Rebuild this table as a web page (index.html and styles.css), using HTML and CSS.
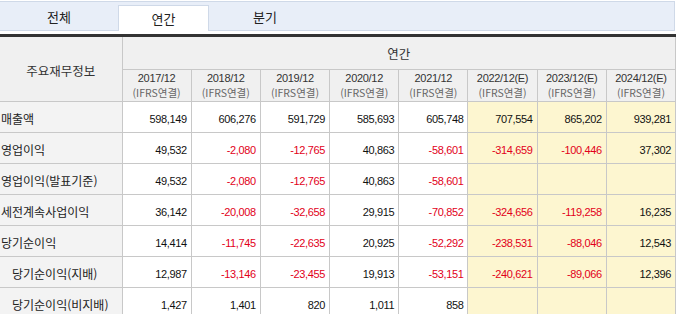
FILE: index.html
```html
<!DOCTYPE html>
<html lang="ko">

<head>
  <meta charset="UTF-8">
  <meta name="viewport" content="width=device-width, initial-scale=1.0">
  <title>주요재무정보</title>
  <link rel="stylesheet" href="styles.css">
</head>

<body>
  <ul class="tabs">
    <li class="tab tab-all">전체</li>
    <li class="tab tab-year active">연간</li>
    <li class="tab tab-quarter">분기</li>
  </ul>
  <div class="fin">
    <table class="fin-table">
      <colgroup>
        <col class="col-label">
        <col span="8">
      </colgroup>
      <thead>
        <tr class="head-top">
          <th rowspan="2" class="head-label">주요재무정보</th>
          <th colspan="8">연간</th>
        </tr>
        <tr class="head-years">
          <th><span class="y">2017/12</span><span class="ifrs">(IFRS연결)</span></th>
          <th><span class="y">2018/12</span><span class="ifrs">(IFRS연결)</span></th>
          <th><span class="y">2019/12</span><span class="ifrs">(IFRS연결)</span></th>
          <th><span class="y">2020/12</span><span class="ifrs">(IFRS연결)</span></th>
          <th><span class="y">2021/12</span><span class="ifrs">(IFRS연결)</span></th>
          <th><span class="y">2022/12(E)</span><span class="ifrs">(IFRS연결)</span></th>
          <th><span class="y">2023/12(E)</span><span class="ifrs">(IFRS연결)</span></th>
          <th><span class="y">2024/12(E)</span><span class="ifrs">(IFRS연결)</span></th>
        </tr>
      </thead>
      <tbody>
        <tr>
          <th class="label">매출액</th>
          <td>598,149</td><td>606,276</td><td>591,729</td><td>585,693</td><td>605,748</td>
          <td class="est">707,554</td><td class="est">865,202</td><td class="est">939,281</td>
        </tr>
        <tr>
          <th class="label">영업이익</th>
          <td>49,532</td><td class="neg">-2,080</td><td class="neg">-12,765</td><td>40,863</td><td class="neg">-58,601</td>
          <td class="est neg">-314,659</td><td class="est neg">-100,446</td><td class="est">37,302</td>
        </tr>
        <tr>
          <th class="label">영업이익(발표기준)</th>
          <td>49,532</td><td class="neg">-2,080</td><td class="neg">-12,765</td><td>40,863</td><td class="neg">-58,601</td>
          <td class="est"></td><td class="est"></td><td class="est"></td>
        </tr>
        <tr>
          <th class="label">세전계속사업이익</th>
          <td>36,142</td><td class="neg">-20,008</td><td class="neg">-32,658</td><td>29,915</td><td class="neg">-70,852</td>
          <td class="est neg">-324,656</td><td class="est neg">-119,258</td><td class="est">16,235</td>
        </tr>
        <tr>
          <th class="label">당기순이익</th>
          <td>14,414</td><td class="neg">-11,745</td><td class="neg">-22,635</td><td>20,925</td><td class="neg">-52,292</td>
          <td class="est neg">-238,531</td><td class="est neg">-88,046</td><td class="est">12,543</td>
        </tr>
        <tr>
          <th class="label sub">당기순이익(지배)</th>
          <td>12,987</td><td class="neg">-13,146</td><td class="neg">-23,455</td><td>19,913</td><td class="neg">-53,151</td>
          <td class="est neg">-240,621</td><td class="est neg">-89,066</td><td class="est">12,396</td>
        </tr>
        <tr>
          <th class="label sub">당기순이익(비지배)</th>
          <td>1,427</td><td>1,401</td><td>820</td><td>1,011</td><td>858</td>
          <td class="est"></td><td class="est"></td><td class="est"></td>
        </tr>
      </tbody>
    </table>
  </div>
</body>

</html>
```

FILE: styles.css
```css
html {
  box-sizing: border-box;
  font-family: 'Noto Sans CJK KR', sans-serif;
  font-size: 12px;
  color: #333;
}

*,
*:after,
*:before {
  box-sizing: inherit;
}

body {
  margin: 0;
  background-color: #fff;
}

/* tabs */
.tabs {
  display: flex;
  margin: 1px 0 3px 0;
  padding: 0;
  width: 675px;
  height: 30px;
  list-style: none;
  border: 1px solid #cfd9e8;
  border-left: none;
  background-color: #e8eef8;
}

.tab {
  display: flex;
  align-items: center;
  justify-content: center;
  padding-top: 1px;
  font-size: 13px;
  color: #222;
}

.tab-all {
  width: 118px;
}

.tab-year {
  width: 91px;
}

.tab-quarter {
  width: 112px;
}

.tab.active {
  margin-top: 3px;
  margin-bottom: -1px;
  padding-top: 0;
  background-color: #fff;
  border: 1px solid #cfd9e8;
  border-bottom: none;
}

/* table */
.fin {
  border-top: 3px solid #333;
  width: 676px;
}

.fin-table {
  width: 676px;
  table-layout: fixed;
  border-collapse: collapse;
}

.col-label {
  width: 122px;
}

.fin-table th,
.fin-table td {
  border: 1px solid #c8c8c8;
  padding: 0;
}

.fin-table tr> :first-child {
  border-left: none;
}

.fin-table thead tr:first-child th {
  border-top: none;
}

.fin-table thead th {
  background-color: #f0f0f0;
  font-weight: normal;
  text-align: center;
  color: #333;
}

.head-top {
  height: 32px;
}

.head-top th {
  padding-top: 1px;
  font-size: 12.5px;
}

.head-label {
  padding-top: 4px !important;
}

.head-years {
  height: 32px;
}

.head-years th {
  padding-top: 1px;
}

.head-years .y {
  display: block;
  font-family: 'Liberation Sans', Arial, sans-serif;
  font-size: 11px;
  line-height: 13px;
  color: #333;
  letter-spacing: -.3px;
}

.head-years .ifrs {
  display: block;
  font-size: 10.5px;
  line-height: 15px;
  color: #666;
}

.fin-table tbody tr {
  height: 31px;
}

.label {
  padding: 4px 0 0 1px !important;
  background-color: #f3f3f3;
  font-weight: normal;
  text-align: left;
  font-size: 12px;
  color: #222;
  white-space: nowrap;
}

.label.sub {
  padding-left: 12px !important;
}

.fin-table td {
  padding: 4px 4px 0 0;
  text-align: right;
  font-family: 'Liberation Sans', Arial, sans-serif;
  font-size: 11px;
  letter-spacing: -.35px;
  color: #111;
}

.fin-table td.est {
  background-color: #fdf6d0;
}

.fin-table td.neg {
  color: #e2001a;
}
```
